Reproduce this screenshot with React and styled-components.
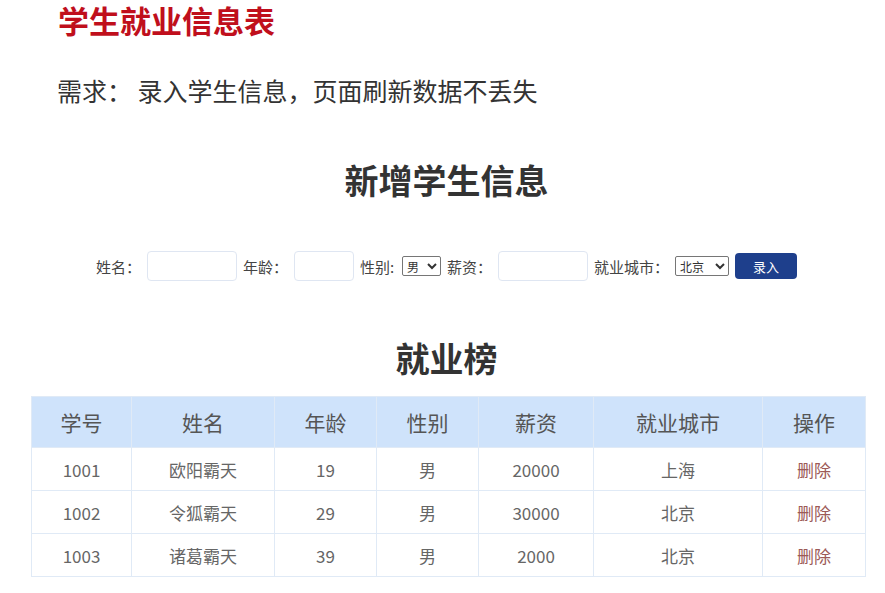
import React from "react";
import styled, { createGlobalStyle } from "styled-components";

const GlobalStyle = createGlobalStyle`
  body {
    margin: 0;
    background: #fff;
    font-family: "Noto Sans CJK SC", "Noto Sans", sans-serif;
  }
`;

const Page = styled.div`
  width: 885px;
  height: 593px;
  overflow: hidden;
`;

const Title = styled.h1`
  margin: 0;
  padding: 0 0 0 58px;
  font-size: 31px;
  line-height: 40px;
  font-weight: 700;
  color: #c00f1c;
`;

const Requirement = styled.p`
  margin: 34px 0 0;
  padding-left: 57px;
  font-size: 25px;
  line-height: 32px;
  color: #333;
`;

const SectionTitle = styled.h2`
  margin: ${(props) => props.mt}px 0 0;
  padding-left: 8px;
  text-align: center;
  font-size: 34px;
  line-height: 44px;
  font-weight: 700;
  color: #333;
`;

const Form = styled.div`
  margin-top: 49px;
  height: 30px;
  display: flex;
  align-items: center;
  justify-content: center;
  gap: 6px;
  padding-left: 8px;
  font-size: 15px;
  color: #444;
`;

const Label = styled.span`
  white-space: nowrap;
  margin-right: ${(props) => props.extra || 0}px;
`;

const Input = styled.input`
  box-sizing: border-box;
  width: ${(props) => props.w}px;
  height: 30px;
  border: 1px solid #dfe6f2;
  border-radius: 4px;
  outline: none;
`;

const Select = styled.select`
  box-sizing: border-box;
  width: ${(props) => props.w}px;
  height: 20px;
  font-family: inherit;
  font-size: 12px;
  color: #333;
  border: 1px solid #767676;
  border-radius: 2px;
  padding: 0;
  background: #fff;
`;

const Button = styled.button`
  width: 62px;
  height: 26px;
  border: none;
  border-radius: 4px;
  background: #1e3f8c;
  color: #fff;
  font-family: inherit;
  font-size: 13px;
`;

const TableWrap = styled.div`
  margin-top: 16px;
  padding-left: 31px;
`;

const Table = styled.table`
  width: 834px;
  border-collapse: collapse;
  table-layout: fixed;
  text-align: center;
`;

const Th = styled.th`
  height: 50px;
  padding: 0;
  background: #cfe3fb;
  font-size: 21px;
  font-weight: 400;
  color: #555;
  border: 1px solid #e0eaf6;
`;

const Td = styled.td`
  height: 42px;
  padding: 0;
  font-size: 17px;
  color: ${(props) => (props.danger ? "#9c5a57" : "#666")};
  border: 1px solid #e0eaf6;
`;

const columns = [
  { name: "学号", w: 100 },
  { name: "姓名", w: 143 },
  { name: "年龄", w: 102 },
  { name: "性别", w: 102 },
  { name: "薪资", w: 115 },
  { name: "就业城市", w: 169 },
  { name: "操作", w: 103 },
];

const students = [
  { id: 1001, name: "欧阳霸天", age: 19, gender: "男", salary: 20000, city: "上海" },
  { id: 1002, name: "令狐霸天", age: 29, gender: "男", salary: 30000, city: "北京" },
  { id: 1003, name: "诸葛霸天", age: 39, gender: "男", salary: 2000, city: "北京" },
];

export default function App() {
  return (
    <Page>
      <GlobalStyle />
      <Title>学生就业信息表</Title>
      <Requirement>需求： 录入学生信息，页面刷新数据不丢失</Requirement>

      <SectionTitle mt={52}>新增学生信息</SectionTitle>
      <Form>
        <Label>姓名：</Label>
        <Input w={90} />
        <Label>年龄：</Label>
        <Input w={60} />
        <Label extra={2}>性别:</Label>
        <Select w={39} defaultValue="男">
          <option>男</option>
          <option>女</option>
        </Select>
        <Label>薪资：</Label>
        <Input w={90} />
        <Label>就业城市：</Label>
        <Select w={54} defaultValue="北京">
          <option>北京</option>
          <option>上海</option>
        </Select>
        <Button>录入</Button>
      </Form>

      <SectionTitle mt={55}>就业榜</SectionTitle>
      <TableWrap>
        <Table>
          <colgroup>
            {columns.map((c) => (
              <col key={c.name} style={{ width: c.w }} />
            ))}
          </colgroup>
          <thead>
            <tr>
              {columns.map((c) => (
                <Th key={c.name}>{c.name}</Th>
              ))}
            </tr>
          </thead>
          <tbody>
            {students.map((s) => (
              <tr key={s.id}>
                <Td>{s.id}</Td>
                <Td>{s.name}</Td>
                <Td>{s.age}</Td>
                <Td>{s.gender}</Td>
                <Td>{s.salary}</Td>
                <Td>{s.city}</Td>
                <Td danger>删除</Td>
              </tr>
            ))}
          </tbody>
        </Table>
      </TableWrap>
    </Page>
  );
}
